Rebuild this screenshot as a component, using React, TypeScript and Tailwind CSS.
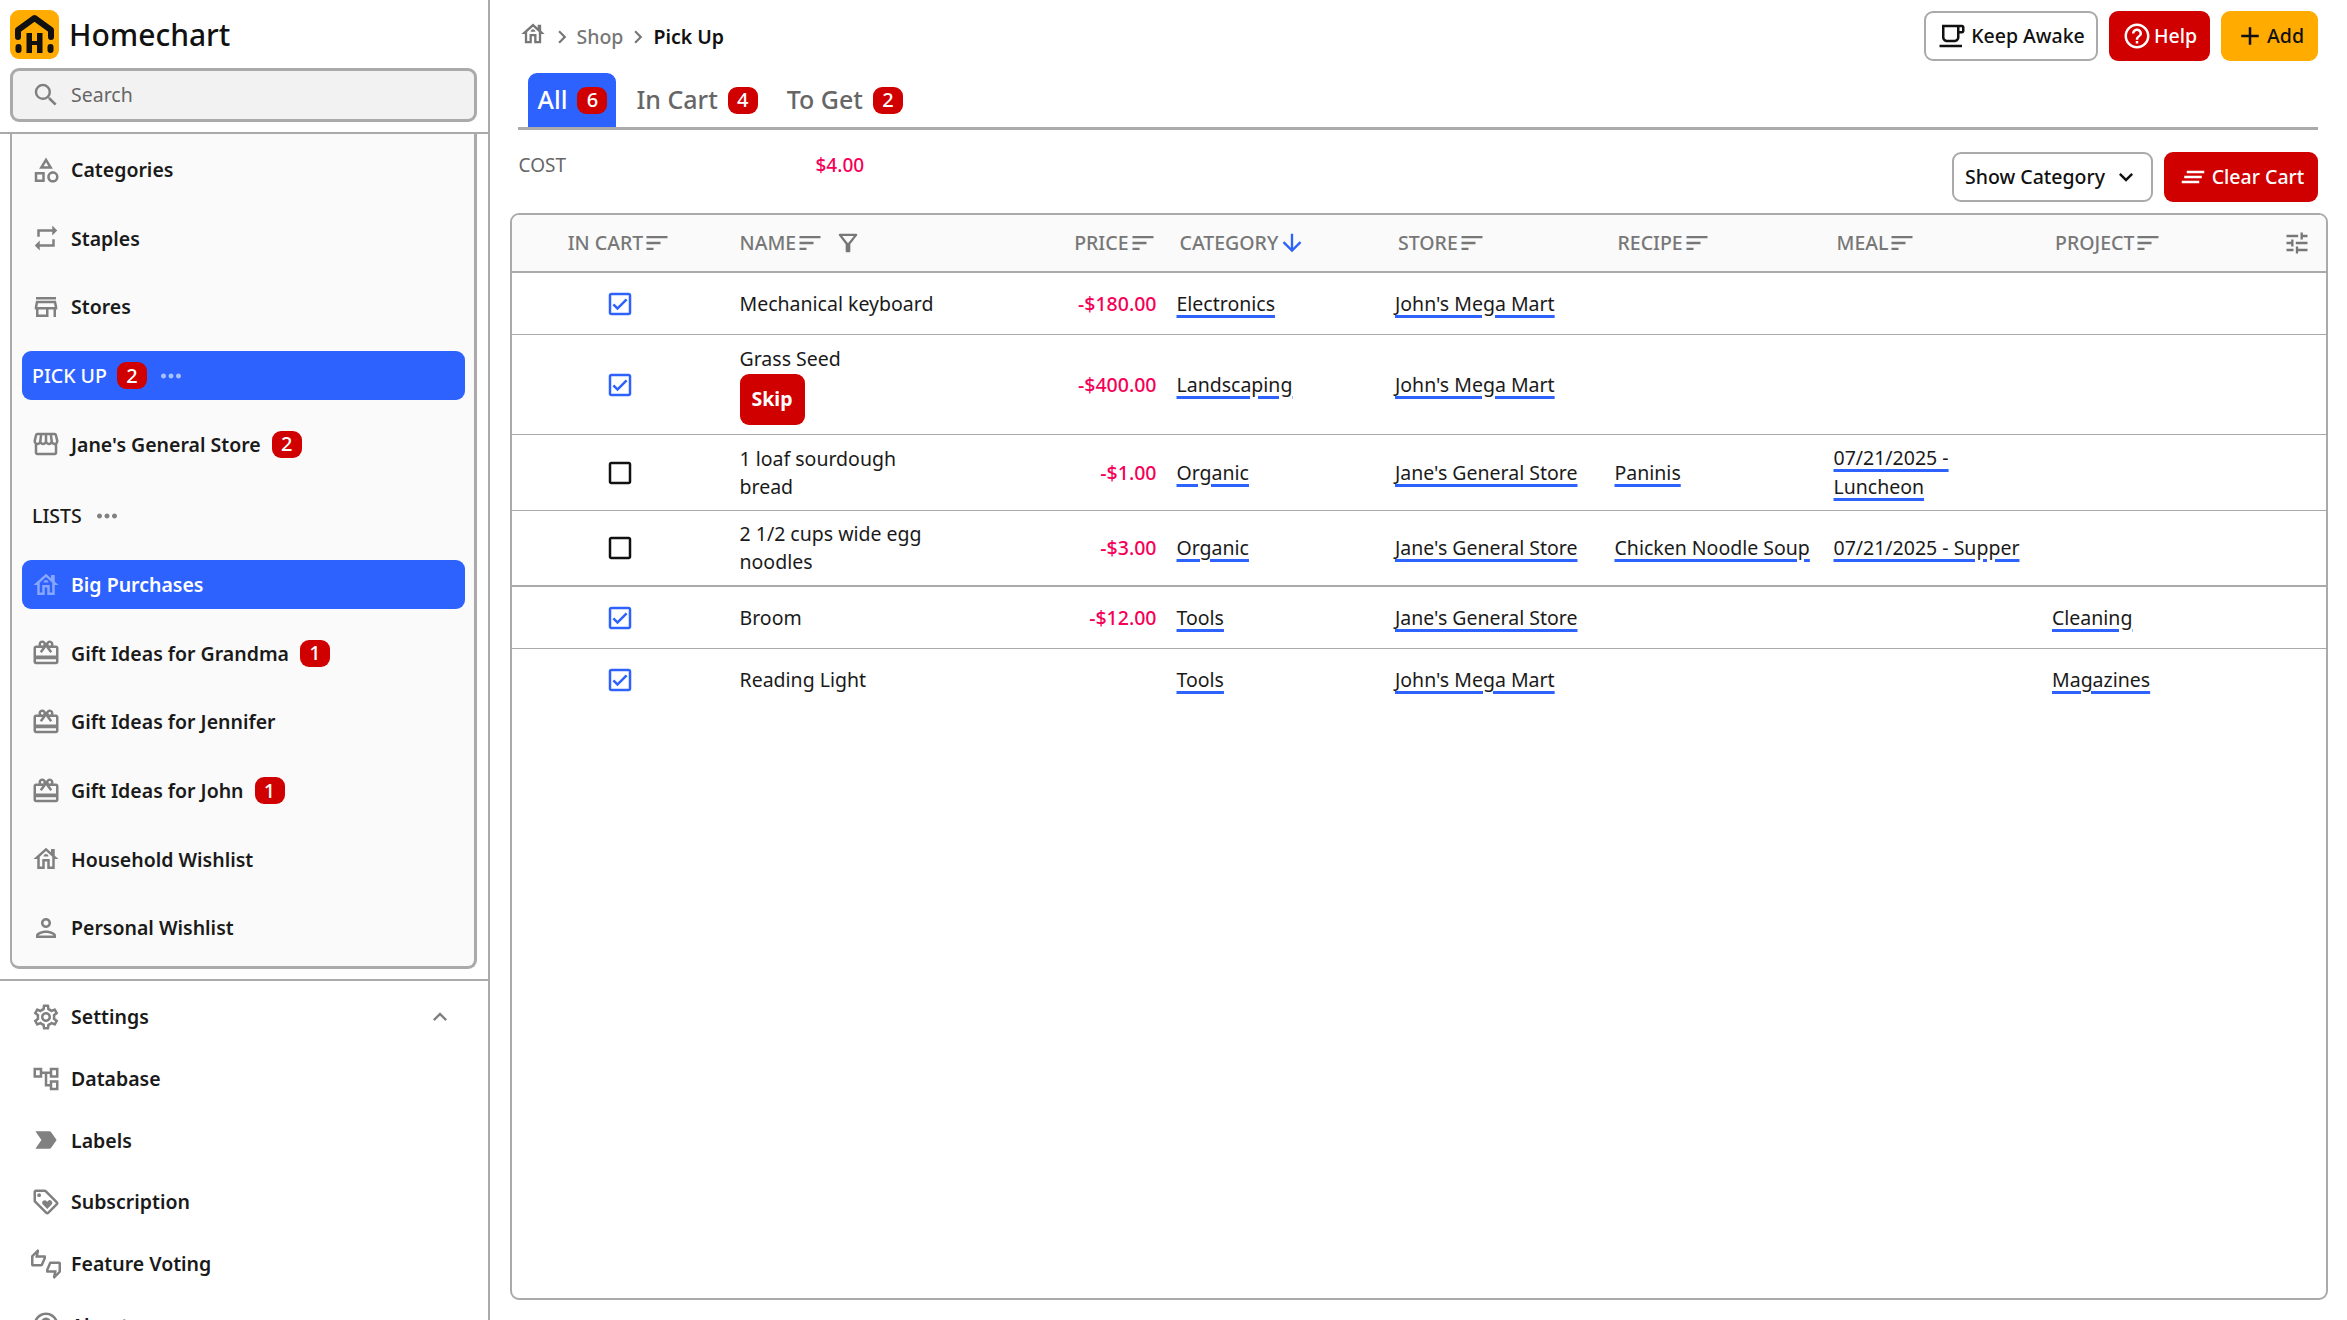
import React from "react";
import {
  MdAdd,
  MdArrowDownward,
  MdCheckBoxOutlineBlank,
  MdChevronRight,
  MdClearAll,
  MdExpandLess,
  MdExpandMore,
  MdHelpOutline,
  MdLabelImportant,
  MdMoreHoriz,
  MdOutlineAccountTree,
  MdOutlineCategory,
  MdOutlineCheckBox,
  MdOutlineFilterAlt,
  MdOutlineHouse,
  MdOutlineLocalCafe,
  MdOutlineLoyalty,
  MdOutlinePerson,
  MdOutlineRedeem,
  MdOutlineSettings,
  MdOutlineStore,
  MdOutlineStorefront,
  MdOutlineThumbsUpDown,
  MdRepeat,
  MdSearch,
  MdSort,
  MdTune,
} from "react-icons/md";

const GRID = "grid grid-cols-[216px_215px_222px_218.5px_219.5px_219px_218.5px_1fr] items-center";

function Logo() {
  return (
    <svg viewBox="0 0 49 49" className="w-[49px] h-[49px] shrink-0">
      <rect width="49" height="49" rx="9" fill="#ffab00" />
      <path d="M8 27v-7L24.5 8 41 20v7" fill="none" stroke="#111" strokeWidth="6" strokeLinejoin="round" strokeLinecap="round" />
      <rect x="5.5" y="34" width="6" height="9" rx="3" fill="#111" />
      <rect x="37.5" y="34" width="6" height="9" rx="3" fill="#111" />
      <path d="M16.5 23v20H22v-8h5v8h5.5V23H27v8h-5v-8z" fill="#111" />
    </svg>
  );
}

function Badge({ n }: { n: number }) {
  return (
    <span className="inline-flex items-center justify-center w-[30px] h-[27px] rounded-[9px] bg-[#d00000] text-white text-[20px] font-medium leading-none">
      {n}
    </span>
  );
}

function NavRow({ icon: Icon, label, badge, active }: { icon: any; label: string; badge?: number; active?: boolean }) {
  return (
    <div className={`flex items-center h-[49px] ml-[10px] mr-[9px] rounded-[9px] pl-[9px] ${active ? "bg-[#2d62ff] text-white" : "text-[#1a1a1a]"}`}>
      <Icon className={`w-[30px] h-[30px] shrink-0 ${active ? "text-[#86a6ff]" : "text-[#808080]"}`} />
      <span className="ml-[10px] text-[19.5px] font-semibold">{label}</span>
      {badge ? (
        <span className="ml-[11px] flex">
          <Badge n={badge} />
        </span>
      ) : null}
    </div>
  );
}

function FootRow({ icon: Icon, label, chevron }: { icon: any; label: string; chevron?: boolean }) {
  return (
    <div className="flex items-center h-[40px] pl-[31px] pr-[34px] text-[#1a1a1a]">
      <Icon className="w-[30px] h-[30px] shrink-0 text-[#808080]" />
      <span className="ml-[10px] text-[19.5px] font-semibold">{label}</span>
      {chevron ? <MdExpandLess className="ml-auto w-[28px] h-[28px] text-[#808080]" /> : null}
    </div>
  );
}

function Sidebar() {
  return (
    <aside className="w-[490px] h-full shrink-0 border-r-[2px] border-[#aaaaaa] flex flex-col overflow-hidden">
      <div className="flex items-center shrink-0 pl-[10px] mt-[10px] h-[49px]">
        <Logo />
        <span className="ml-[10px] text-[30px] font-medium text-[#111] leading-none">Homechart</span>
      </div>
      <div className="ml-[10px] mr-[11px] mt-[9px] h-[54px] shrink-0 flex items-center pl-[18px] rounded-[9px] border-[3px] border-[#aaaaaa] bg-[#f2f2f2] text-[#666]">
        <MdSearch className="w-[30px] h-[30px] text-[#808080]" />
        <span className="ml-[10px] text-[19.5px]">Search</span>
      </div>
      <div className="mt-[10px] shrink-0 border-t-[2px] border-[#aaaaaa]" />
      <div className="ml-[10px] mr-[11px] h-[835px] shrink-0 flex flex-col gap-[19.7px] pt-[11px] bg-[#fafafa] border-l-[2px] border-r-[3px] border-b-[3px] border-[#aaaaaa] rounded-b-[9px]">
        <NavRow icon={MdOutlineCategory} label="Categories" />
        <NavRow icon={MdRepeat} label="Staples" />
        <NavRow icon={MdOutlineStore} label="Stores" />
        <div className="flex items-center h-[49px] ml-[10px] mr-[9px] rounded-[9px] pl-[10px] bg-[#2d62ff] text-white">
          <span className="text-[19.5px] font-medium">PICK UP</span>
          <span className="ml-[10px] flex">
            <Badge n={2} />
          </span>
          <MdMoreHoriz className="ml-[9px] w-[30px] h-[30px] text-[#a9c0ff]" />
        </div>
        <NavRow icon={MdOutlineStorefront} label="Jane's General Store" badge={2} />
        <div className="flex items-center h-[49px] ml-[10px] mr-[9px] mt-[3px] pl-[10px] text-[#1a1a1a]">
          <span className="text-[19.5px] font-medium">LISTS</span>
          <MdMoreHoriz className="ml-[10px] w-[30px] h-[30px] text-[#808080]" />
        </div>
        <NavRow icon={MdOutlineHouse} label="Big Purchases" active />
        <NavRow icon={MdOutlineRedeem} label="Gift Ideas for Grandma" badge={1} />
        <NavRow icon={MdOutlineRedeem} label="Gift Ideas for Jennifer" />
        <NavRow icon={MdOutlineRedeem} label="Gift Ideas for John" badge={1} />
        <NavRow icon={MdOutlineHouse} label="Household Wishlist" />
        <NavRow icon={MdOutlinePerson} label="Personal Wishlist" />
      </div>
      <div className="mt-[10px] shrink-0 border-t-[2px] border-[#aaaaaa]" />
      <div className="flex flex-col shrink-0 gap-[21.7px] pt-[16px]">
        <FootRow icon={MdOutlineSettings} label="Settings" chevron />
        <FootRow icon={MdOutlineAccountTree} label="Database" />
        <FootRow icon={MdLabelImportant} label="Labels" />
        <FootRow icon={MdOutlineLoyalty} label="Subscription" />
        <FootRow icon={MdOutlineThumbsUpDown} label="Feature Voting" />
        <FootRow icon={MdHelpOutline} label="About" />
      </div>
    </aside>
  );
}

function Tab({ label, n, active }: { label: string; n: number; active?: boolean }) {
  return (
    <div className={`flex items-center gap-[10px] h-[54px] pl-[10px] pr-[9px] rounded-t-[9px] text-[25px] font-medium ${active ? "bg-[#2d62ff] text-white" : "text-[#666]"}`}>
      <span>{label}</span>
      <Badge n={n} />
    </div>
  );
}

function Head({ label, filter, sorted }: { label: string; filter?: boolean; sorted?: boolean }) {
  return (
    <div className={`flex items-center text-[19.5px] font-medium text-[#777] ${filter ? "pl-[12px]" : "pl-[15px]"}`}>
      <span>{label}</span>
      {sorted ? (
        <MdArrowDownward className="w-[28px] h-[28px] text-[#2d62ff]" />
      ) : (
        <MdSort className="w-[28px] h-[28px] text-[#777]" />
      )}
      {filter ? <MdOutlineFilterAlt className="ml-[10px] w-[28px] h-[28px] text-[#777]" /> : null}
    </div>
  );
}

function Lnk({ children }: { children: React.ReactNode }) {
  return (
    <span className="text-[19.5px] leading-[28px] text-[#1a1a1a] underline decoration-[#2d62ff] decoration-[3px] underline-offset-[4px]">
      {children}
    </span>
  );
}

function Check({ on }: { on?: boolean }) {
  return on ? (
    <MdOutlineCheckBox className="w-[30px] h-[30px] text-[#2d62ff]" />
  ) : (
    <MdCheckBoxOutlineBlank className="w-[30px] h-[30px] text-[#111]" />
  );
}

const rows = [
  { h: "h-[62px]", on: true, name: "Mechanical keyboard", price: "-$180.00", cat: "Electronics", store: "John's Mega Mart", border: "border-b" },
  { h: "h-[100px]", on: true, name: "Grass Seed", skip: true, price: "-$400.00", cat: "Landscaping", store: "John's Mega Mart", border: "border-b" },
  { h: "h-[76px]", name: "1 loaf sourdough bread", price: "-$1.00", cat: "Organic", store: "Jane's General Store", recipe: "Paninis", meal: "07/21/2025 - Luncheon", border: "border-b" },
  { h: "h-[76px]", name: "2 1/2 cups wide egg noodles", price: "-$3.00", cat: "Organic", store: "Jane's General Store", recipe: "Chicken Noodle Soup", meal: "07/21/2025 - Supper", border: "border-b-[2px]" },
  { h: "h-[62px]", on: true, name: "Broom", price: "-$12.00", cat: "Tools", store: "Jane's General Store", project: "Cleaning", border: "border-b" },
  { h: "h-[62px]", on: true, name: "Reading Light", cat: "Tools", store: "John's Mega Mart", project: "Magazines", border: "" },
];

function Table() {
  return (
    <div className="flex-1 mb-[20px] border-[2px] border-[#aaaaaa] rounded-[9px] overflow-hidden">
      <div className={`${GRID} h-[58px] bg-[#fafafa] border-b-[2px] border-[#aaaaaa]`}>
        <div className="flex justify-center">
          <div className="flex items-center text-[19.5px] font-medium text-[#777]">
            <span>IN CART</span>
            <MdSort className="w-[28px] h-[28px]" />
          </div>
        </div>
        <Head label="NAME" filter />
        <div className="flex items-center justify-end pr-[8px] text-[19.5px] font-medium text-[#777]">
          <span>PRICE</span>
          <MdSort className="w-[28px] h-[28px]" />
        </div>
        <Head label="CATEGORY" sorted />
        <Head label="STORE" />
        <Head label="RECIPE" />
        <Head label="MEAL" />
        <div className="flex items-center justify-between pr-[15px]">
          <Head label="PROJECT" />
          <MdTune className="w-[28px] h-[28px] text-[#777]" />
        </div>
      </div>
      {rows.map((r) => (
        <div key={r.name} className={`${GRID} ${r.h} ${r.border} border-[#aaaaaa]`}>
          <div className="flex justify-center">
            <Check on={r.on} />
          </div>
          <div className="pl-[12px] text-[19.5px] leading-[28px] text-[#1a1a1a]">
            <div>{r.name}</div>
            {r.skip ? (
              <div className="mt-[1px] w-[65px] h-[51px] flex items-center justify-center rounded-[9px] bg-[#d00000] text-white font-bold">
                Skip
              </div>
            ) : null}
          </div>
          <div className="pr-[8px] text-right text-[19.5px] font-medium text-[#f50057]">{r.price}</div>
          <div className="pl-[12px]"><Lnk>{r.cat}</Lnk></div>
          <div className="pl-[12px]"><Lnk>{r.store}</Lnk></div>
          <div className="pl-[12px]">{r.recipe ? <Lnk>{r.recipe}</Lnk> : null}</div>
          <div className="pl-[12px] pr-[8px] leading-[28px]">{r.meal ? <Lnk>{r.meal}</Lnk> : null}</div>
          <div className="pl-[12px]">{r.project ? <Lnk>{r.project}</Lnk> : null}</div>
        </div>
      ))}
    </div>
  );
}

export default function App() {
  return (
    <div className="w-[2347px] h-[1320px] flex overflow-hidden bg-white font-['Noto_Sans',sans-serif]">
      <Sidebar />
      <main className="flex-1 min-w-0 flex flex-col pl-[19.5px] pr-[19px]">
        <div className="flex items-center justify-between ml-[10px] mr-[10px] pt-[11px]">
          <div className="flex items-center pt-[2px] text-[19.5px] font-medium">
            <MdOutlineHouse className="w-[28px] h-[28px] text-[#777] -mt-[6px] -ml-[1px]" />
            <MdChevronRight className="ml-[2px] w-[26px] h-[26px] text-[#777]" />
            <span className="ml-[2px] text-[#777]">Shop</span>
            <MdChevronRight className="ml-[2px] w-[26px] h-[26px] text-[#777]" />
            <span className="ml-[2px] font-semibold text-[#111]">Pick Up</span>
          </div>
          <div className="flex gap-[11px]">
            <div className="h-[50px] w-[174px] flex items-center justify-center gap-[4px] rounded-[9px] border-[2px] border-[#aaaaaa] text-[19.5px] font-medium text-[#111]">
              <MdOutlineLocalCafe className="w-[30px] h-[30px]" />
              Keep Awake
            </div>
            <div className="h-[50px] w-[101px] flex items-center justify-center gap-[2px] rounded-[9px] bg-[#d00000] text-[19.5px] font-medium text-white">
              <MdHelpOutline className="w-[30px] h-[30px]" />
              Help
            </div>
            <div className="h-[50px] w-[97px] flex items-center justify-center gap-[2px] rounded-[9px] bg-[#ffab00] text-[19.5px] font-medium text-[#111]">
              <MdAdd className="w-[30px] h-[30px]" />
              Add
            </div>
          </div>
        </div>
        <div className="mt-[12px] ml-[8px] mr-[10px] pl-[10px] flex gap-[10px] border-b-[3px] border-[#aaaaaa]">
          <Tab label="All" n={6} active />
          <Tab label="In Cart" n={4} />
          <Tab label="To Get" n={2} />
        </div>
        <div className="mt-[22px] ml-[9px] mr-[10px] h-[50px] flex items-start">
          <span className="w-[297px] -mt-[1px] text-[19px] text-[#666]">COST</span>
          <span className="-mt-[1px] text-[19px] font-medium text-[#f50057]">$4.00</span>
          <div className="ml-auto flex gap-[11px]">
            <div className="h-[50px] w-[201px] flex items-center justify-center rounded-[9px] border-[2px] border-[#aaaaaa] text-[19.5px] font-medium text-[#111]">
              Show Category
              <MdExpandMore className="ml-[7px] w-[28px] h-[28px]" />
            </div>
            <div className="h-[50px] w-[154px] flex items-center justify-center gap-[4px] rounded-[9px] bg-[#d00000] text-[19.5px] font-medium text-white">
              <MdClearAll className="w-[30px] h-[30px]" />
              Clear Cart
            </div>
          </div>
        </div>
        <div className="h-[11px] shrink-0" />
        <Table />
      </main>
    </div>
  );
}
